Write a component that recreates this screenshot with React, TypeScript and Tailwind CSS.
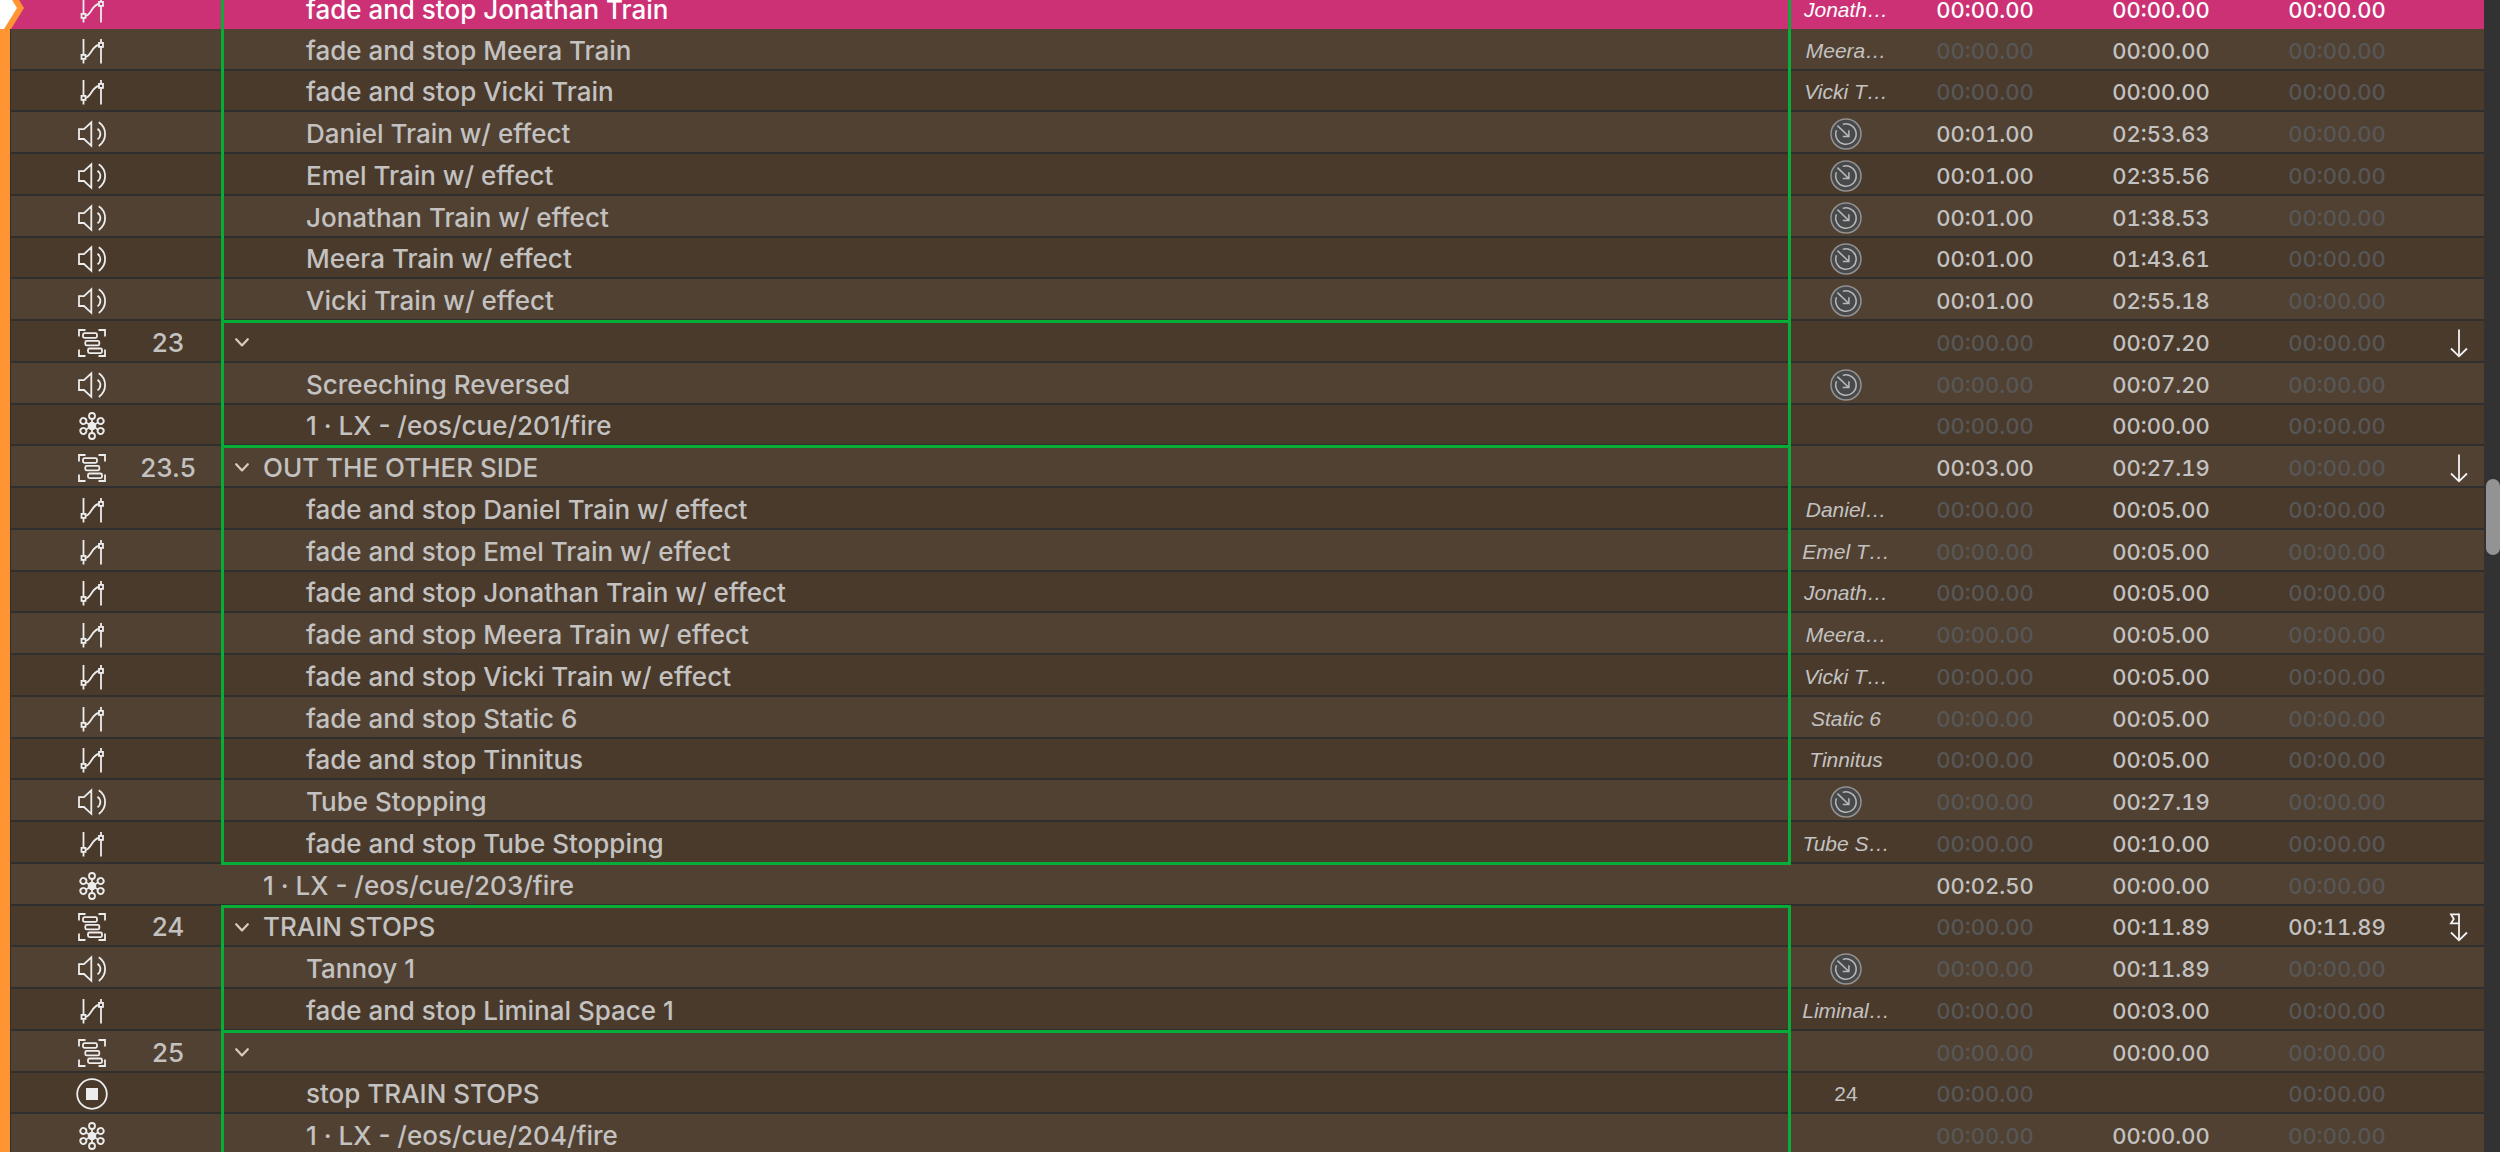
import clsx from 'clsx';

type Kind = 'fade' | 'audio' | 'group' | 'network' | 'stop';
type Box = 'start' | 'mid' | 'end' | 'none';

interface Cue {
  kind: Kind;
  number?: string;
  title: string;
  target?: string;
  pre: string;
  action: string;
  post?: string;
  box: Box;
  next?: 'continue' | 'follow';
}

const ZERO = '00:00.00';

const fade = (title: string, target: string, action: string, box: Box = 'mid'): Cue => ({
  kind: 'fade', title: `fade and stop ${title}`, target, pre: ZERO, action, box,
});

const audio = (title: string, pre: string, action: string, box: Box = 'mid'): Cue => ({
  kind: 'audio', title, target: 'file', pre, action, box,
});

const cues: Cue[] = [
  fade('Jonathan Train', 'Jonath…', ZERO),
  fade('Meera Train', 'Meera…', ZERO),
  fade('Vicki Train', 'Vicki T…', ZERO),
  audio('Daniel Train w/ effect', '00:01.00', '02:53.63'),
  audio('Emel Train w/ effect', '00:01.00', '02:35.56'),
  audio('Jonathan Train w/ effect', '00:01.00', '01:38.53'),
  audio('Meera Train w/ effect', '00:01.00', '01:43.61'),
  audio('Vicki Train w/ effect', '00:01.00', '02:55.18'),
  { kind: 'group', number: '23', title: '', pre: ZERO, action: '00:07.20', box: 'start', next: 'continue' },
  audio('Screeching Reversed', ZERO, '00:07.20'),
  { kind: 'network', title: '1 · LX - /eos/cue/201/fire', pre: ZERO, action: ZERO, box: 'mid' },
  { kind: 'group', number: '23.5', title: 'OUT THE OTHER SIDE', pre: '00:03.00', action: '00:27.19', box: 'start', next: 'continue' },
  fade('Daniel Train w/ effect', 'Daniel…', '00:05.00'),
  fade('Emel Train w/ effect', 'Emel T…', '00:05.00'),
  fade('Jonathan Train w/ effect', 'Jonath…', '00:05.00'),
  fade('Meera Train w/ effect', 'Meera…', '00:05.00'),
  fade('Vicki Train w/ effect', 'Vicki T…', '00:05.00'),
  fade('Static 6', 'Static 6', '00:05.00'),
  fade('Tinnitus', 'Tinnitus', '00:05.00'),
  audio('Tube Stopping', ZERO, '00:27.19'),
  fade('Tube Stopping', 'Tube S…', '00:10.00', 'end'),
  { kind: 'network', title: '1 · LX - /eos/cue/203/fire', pre: '00:02.50', action: ZERO, box: 'none' },
  { kind: 'group', number: '24', title: 'TRAIN STOPS', pre: ZERO, action: '00:11.89', post: '00:11.89', box: 'start', next: 'follow' },
  audio('Tannoy 1', ZERO, '00:11.89'),
  fade('Liminal Space 1', 'Liminal…', '00:03.00'),
  { kind: 'group', number: '25', title: '', pre: ZERO, action: ZERO, box: 'start' },
  { kind: 'stop', title: 'stop TRAIN STOPS', target: '24', pre: ZERO, action: '', box: 'mid' },
  { kind: 'network', title: '1 · LX - /eos/cue/204/fire', pre: ZERO, action: ZERO, box: 'mid' },
];

const spokes = [0, 60, 120, 180, 240, 300];

const KindIcon = ({ kind }: { kind: Kind }) => (
  <svg
    viewBox="0 0 32 32"
    className="mx-auto size-8"
    fill="none"
    stroke="#ededed"
    strokeWidth="1.8"
    role="img"
    aria-label={kind}
  >
    {kind === 'fade' && (
      <>
        <path d="M7.5 4V19.7M7.5 23.7V28.5M25 4V7.7M25 11.7V28.5" />
        <rect x="5.5" y="19.9" width="4" height="4" />
        <rect x="23" y="7.9" width="4" height="4" />
        <path d="M9.8 21.9C15 21.5 16 10.5 22.8 10" />
      </>
    )}
    {kind === 'audio' && (
      <>
        <path d="M3 11.2H8L15.3 4.4V27.8L8 21H3Z" />
        <path d="M21.5 10.8C25.3 13.6 25.3 18.6 21.5 21.4M22.8 4.3C31.2 10 31.2 22.2 22.8 27.9" />
      </>
    )}
    {kind === 'group' && (
      <>
        <path d="M3 9.5V3H9.5M22.5 3H29V9.5M29 22.5V29H22.5M9.5 29H3V22.5" />
        <rect x="7" y="6.2" width="14" height="4.6" rx="1.5" />
        <rect x="9.3" y="13.8" width="14" height="4.6" rx="1.5" />
        <rect x="12" y="21.5" width="14" height="4.6" rx="1.5" />
      </>
    )}
    {kind === 'network' && (
      <>
        <circle cx="16" cy="16" r="3.4" fill="#ededed" />
        {spokes.map((angle) => (
          <g key={angle} transform={`rotate(${angle} 16 16)`}>
            <path d="M16 13V9" />
            <circle cx="16" cy="6" r="3" />
          </g>
        ))}
      </>
    )}
    {kind === 'stop' && (
      <>
        <circle cx="16" cy="16" r="14.8" />
        <rect x="10" y="10" width="12" height="12" fill="#ededed" stroke="none" />
      </>
    )}
  </svg>
);

const FileTarget = () => (
  <button type="button" aria-label="Show target" className="mx-auto block size-8">
    <svg viewBox="0 0 32 32" className="size-8" fill="none" stroke="#b9b9b9" strokeWidth="1.5">
      <circle cx="16" cy="16" r="15" fill="#48494b" stroke="#929292" />
      <path d="M12.8 6.4A10.2 10.2 0 1 1 6.5 12.3" />
      <path d="M7.4 7.6L18.8 18.5M12.8 18.5H18.9V12.2" />
    </svg>
  </button>
);

const NextArrow = ({ follow }: { follow: boolean }) => (
  <svg
    viewBox="0 0 20 30"
    className="mx-auto h-[30px] w-5"
    fill="none"
    stroke="#f2f2f2"
    strokeWidth="1.8"
    role="img"
    aria-label={follow ? 'auto-follow' : 'auto-continue'}
  >
    <path d="M10 1.5V28M2 20.5L10 28.3L18 20.5" />
    {follow && <path d="M10 2.3H2L4.8 7L2 11.3H10" />}
  </svg>
);

const Playhead = () => (
  <svg viewBox="0 0 24 42" className="absolute top-0 left-0 h-[42px] w-6">
    <path d="M0 0H11L24 21L11 42H0Z" fill="#ff9433" />
    <path d="M0 0H4L17 21L4 42H0Z" fill="#fff" />
  </svg>
);

const Time = ({ value, dim }: { value: string; dim?: boolean }) => (
  <td className={clsx('pt-[3px] text-[22px] font-medium tabular-nums', dim && 'text-[#575757]')}>{value}</td>
);

const CueRow = ({ cue, active }: { cue: Cue; active: boolean }) => {
  const indented = cue.kind !== 'group' && cue.box !== 'none';
  return (
    <tr
      className={clsx(
        'h-[42px] nth-[4n+3]:h-[41px] text-center text-[#c3c2c1]',
        active
          ? 'bg-[#cc3175] [&>td]:text-white'
          : 'odd:bg-[#4a3a2c] even:bg-[#514132] [&>td]:border-b-2 [&>td]:border-[#2f2f2f]',
      )}
    >
      <td className="relative border-r border-r-[#3a3530] border-b-0! bg-[#ff9433]">{active && <Playhead />}</td>
      <td />
      <td className="pt-[3px]"><KindIcon kind={cue.kind} /></td>
      <td className="pt-[3px] text-[26px] font-medium">{cue.number}</td>
      <td className="relative pt-[3px] text-left text-[26px] font-medium whitespace-nowrap">
        <div className={clsx('flex items-center', indented ? 'pl-[85px]' : cue.kind === 'group' ? 'gap-3.5 pl-3.5' : 'pl-[42px]')}>
          {cue.kind === 'group' && (
            <button type="button" aria-label="Collapse group" className="py-2">
              <svg viewBox="0 0 14 9" className="h-[9px] w-3.5" fill="none" stroke="#dccabb" strokeWidth="2.2" strokeLinecap="round" strokeLinejoin="round">
                <path d="M1.2 1.2L7 7.4L12.8 1.2" />
              </svg>
            </button>
          )}
          {cue.title}
        </div>
        {cue.box !== 'none' && (
          <div
            className={clsx(
              'pointer-events-none absolute inset-x-0 -top-px -bottom-[3px] z-10 border-x-[3px] border-[#06ad36]',
              cue.box === 'start' && 'border-t-[3px]',
              cue.box === 'end' && 'border-b-[3px]',
            )}
          />
        )}
      </td>
      <td className="pt-[3px] pl-1 font-['Liberation_Sans',sans-serif] text-[21px] whitespace-nowrap">
        {cue.target === 'file' ? <FileTarget /> : <span className={clsx(cue.kind === 'fade' && 'italic')}>{cue.target}</span>}
      </td>
      <Time value={cue.pre} dim={cue.pre === ZERO && !active} />
      <Time value={cue.action} />
      <Time value={cue.post ?? ZERO} dim={!cue.post && !active} />
      <td className="pt-[3px] pl-2">{cue.next && <NextArrow follow={cue.next === 'follow'} />}</td>
    </tr>
  );
};

export default function App() {
  return (
    <div className="flex h-screen overflow-hidden bg-[#323232] font-['Inter',sans-serif] leading-8">
      <main className="min-w-0 flex-1">
        <table className="-mt-[13px] w-full table-fixed border-separate border-spacing-0">
          <colgroup>
            <col className="w-[11px]" />
            <col className="w-[58px]" />
            <col className="w-[46px]" />
            <col className="w-[106px]" />
            <col />
            <col className="w-[106px]" />
            <col className="w-44" />
            <col className="w-44" />
            <col className="w-44" />
            <col className="w-[59px]" />
          </colgroup>
          <tbody>
            {cues.map((cue, i) => (
              <CueRow key={i} cue={cue} active={i === 0} />
            ))}
          </tbody>
        </table>
      </main>
      <div className="w-4 pl-0.5">
        <div className="mt-[479px] h-[76px] rounded-full bg-[#939393]" />
      </div>
    </div>
  );
}
